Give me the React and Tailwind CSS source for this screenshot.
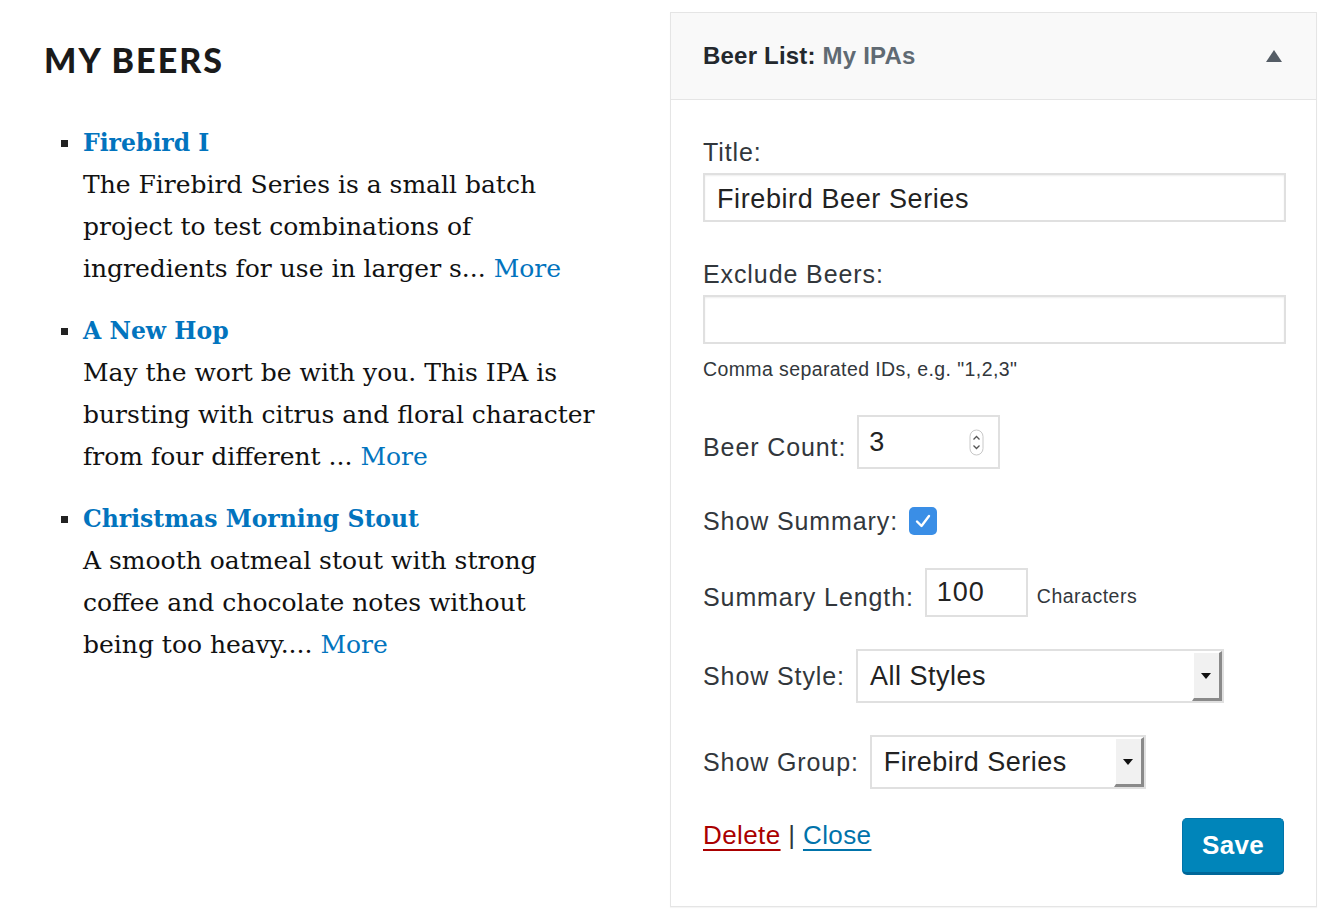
import React from "react";

const serif = { fontFamily: '"DejaVu Serif", "Liberation Serif", serif' };
const sans = { fontFamily: '"Liberation Sans", Arial, sans-serif' };

function Item({ title, lines, first }) {
  return (
    <li className={`flex ${first ? "" : "mt-[20px]"}`}>
      <div className="w-[39px] shrink-0 flex justify-end pr-[15px] pt-[18px]">
        <span className="block w-[7px] h-[7px] bg-[#222]" />
      </div>
      <div>
        <a className="block text-[#0274be] font-bold text-[23.5px] leading-[42px]">{title}</a>
        {lines.map((l, i) => (
          <div key={i} className="text-[25px] leading-[42px] text-[#111] whitespace-nowrap">
            {l}
            {i === lines.length - 1 && <a className="text-[#0274be]"> More</a>}
          </div>
        ))}
      </div>
    </li>
  );
}

function Spinner() {
  return (
    <svg width="15" height="27" viewBox="0 0 15 27" className="mr-[14px]">
      <rect x="1" y="1" width="13" height="25" rx="6.5" fill="#fff" stroke="#c8c8c8" />
      <path d="M4.5 10.5 L7.5 7.5 L10.5 10.5" fill="none" stroke="#555" strokeWidth="1.3" />
      <path d="M4.5 16.5 L7.5 19.5 L10.5 16.5" fill="none" stroke="#555" strokeWidth="1.3" />
    </svg>
  );
}

function SelectArrow() {
  return (
    <div className="h-full w-[30px] flex items-center justify-center bg-[#f1f1f1] border-t-2 border-l-2 border-t-white border-l-white border-r-[3px] border-b-[3px] border-r-[#8a8a8a] border-b-[#8a8a8a]">
      <svg width="10" height="6" viewBox="0 0 10 6">
        <path d="M0 0 L10 0 L5 6 Z" fill="#111" />
      </svg>
    </div>
  );
}

export default function App() {
  return (
    <div className="w-[1324px] h-[916px] bg-white flex" style={sans}>
      <div className="w-[670px] shrink-0 pl-[44px]" style={serif}>
        <h1
          className="mt-[40px] text-[34px] leading-[40px] font-black tracking-[0.06em] text-[#1a1a1a]"
          style={{ fontFamily: '"Lato", "Liberation Sans", sans-serif' }}
        >
          MY BEERS
        </h1>
        <ul className="mt-[42px]">
          <Item
            first
            title="Firebird I"
            lines={[
              "The Firebird Series is a small batch",
              "project to test combinations of",
              "ingredients for use in larger s...",
            ]}
          />
          <Item
            title="A New Hop"
            lines={[
              "May the wort be with you. This IPA is",
              "bursting with citrus and floral character",
              "from four different ...",
            ]}
          />
          <Item
            title="Christmas Morning Stout"
            lines={[
              "A smooth oatmeal stout with strong",
              "coffee and chocolate notes without",
              "being too heavy....",
            ]}
          />
        </ul>
      </div>

      <div className="mt-[12px] w-[647px] h-[895px] border border-[#e5e5e5] shadow-[0_1px_1px_rgba(0,0,0,0.04)] flex flex-col">
        <div className="h-[87px] shrink-0 bg-[#f9f9f9] border-b border-[#e5e5e5] flex items-center justify-between pl-[32px] pr-[34px]">
          <div className="text-[24px] font-bold text-[#23282d] tracking-[0.2px]">
            Beer List: <span className="text-[#606a73]">My IPAs</span>
          </div>
          <svg width="16" height="12" viewBox="0 0 16 12">
            <path d="M8 0 L16 12 L0 12 Z" fill="#555d66" />
          </svg>
        </div>

        <div className="pl-[32px] pr-[30px] text-[#32373c] text-[25px] tracking-[0.9px] flex flex-col">
          <div className="mt-[37px] leading-[30px]">Title:</div>
          <div className="mt-[6px] h-[49px] border-2 border-[#e0e0e0] flex items-center pl-[12px] pt-[4px] text-[27px] tracking-[0.6px] text-[#222] shadow-[inset_0_1px_2px_rgba(0,0,0,0.07)]">
            Firebird Beer Series
          </div>

          <div className="mt-[37px] leading-[30px]">Exclude Beers:</div>
          <div className="mt-[6px] h-[49px] border-2 border-[#e0e0e0] shadow-[inset_0_1px_2px_rgba(0,0,0,0.07)]" />
          <div className="mt-[13px] text-[19.5px] leading-[24px] tracking-[0.4px]">
            Comma separated IDs, e.g. "1,2,3"
          </div>

          <div className="mt-[34px] flex items-center">
            <span className="mt-[10px] leading-[30px]">Beer Count:</span>
            <div className="ml-[11px] w-[143px] h-[54px] border-2 border-[#e0e0e0] flex items-center justify-between pl-[10px] text-[27px] text-[#222]">
              <span>3</span>
              <Spinner />
            </div>
          </div>

          <div className="mt-[37px] flex items-center">
            <span className="leading-[30px]">Show Summary:</span>
            <span className="ml-[11px] w-[28px] h-[28px] rounded-[5px] bg-[#3a8ee6] flex items-center justify-center">
              <svg width="18" height="16" viewBox="0 0 18 16">
                <path d="M3 8.5 L7.5 13 L15 3" fill="none" stroke="#fff" strokeWidth="2.4" strokeLinecap="round" strokeLinejoin="round" />
              </svg>
            </span>
          </div>

          <div className="mt-[32px] flex items-center">
            <span className="mt-[9px] leading-[30px]">Summary Length:</span>
            <div className="ml-[11px] w-[103px] h-[49px] border-2 border-[#e0e0e0] flex items-center pl-[10px] text-[27px] text-[#222]">
              100
            </div>
            <span className="ml-[9px] mt-[9px] text-[19.5px] tracking-[0.5px]">Characters</span>
          </div>

          <div className="mt-[32px] flex items-center">
            <span className="leading-[30px]">Show Style:</span>
            <div className="ml-[11px] w-[368px] h-[54px] border-2 border-[#e0e0e0] flex items-center justify-between text-[27px] tracking-[0.5px] text-[#222]">
              <span className="pl-[12px]">All Styles</span>
              <SelectArrow />
            </div>
          </div>

          <div className="mt-[32px] flex items-center">
            <span className="leading-[30px]">Show Group:</span>
            <div className="ml-[11px] w-[276px] h-[54px] border-2 border-[#e0e0e0] flex items-center justify-between text-[27px] tracking-[0.5px] text-[#222]">
              <span className="pl-[12px]">Firebird Series</span>
              <SelectArrow />
            </div>
          </div>

          <div className="mt-[29px] flex items-start justify-between pr-[2px]">
            <div className="mt-[2px] text-[26px] leading-[30px] tracking-[0.4px]">
              <a className="text-[#a00] underline underline-offset-[5px]">Delete</a>
              <span className="text-[#32373c]"> | </span>
              <a className="text-[#0073aa] underline underline-offset-[5px]">Close</a>
            </div>
            <button className="w-[102px] h-[57px] rounded-[5px] bg-[#0085ba] border border-[#0073aa] border-b-[3px] border-b-[#006799] text-white text-[26px] font-bold tracking-[0.3px]">
              Save
            </button>
          </div>
        </div>
      </div>
    </div>
  );
}
